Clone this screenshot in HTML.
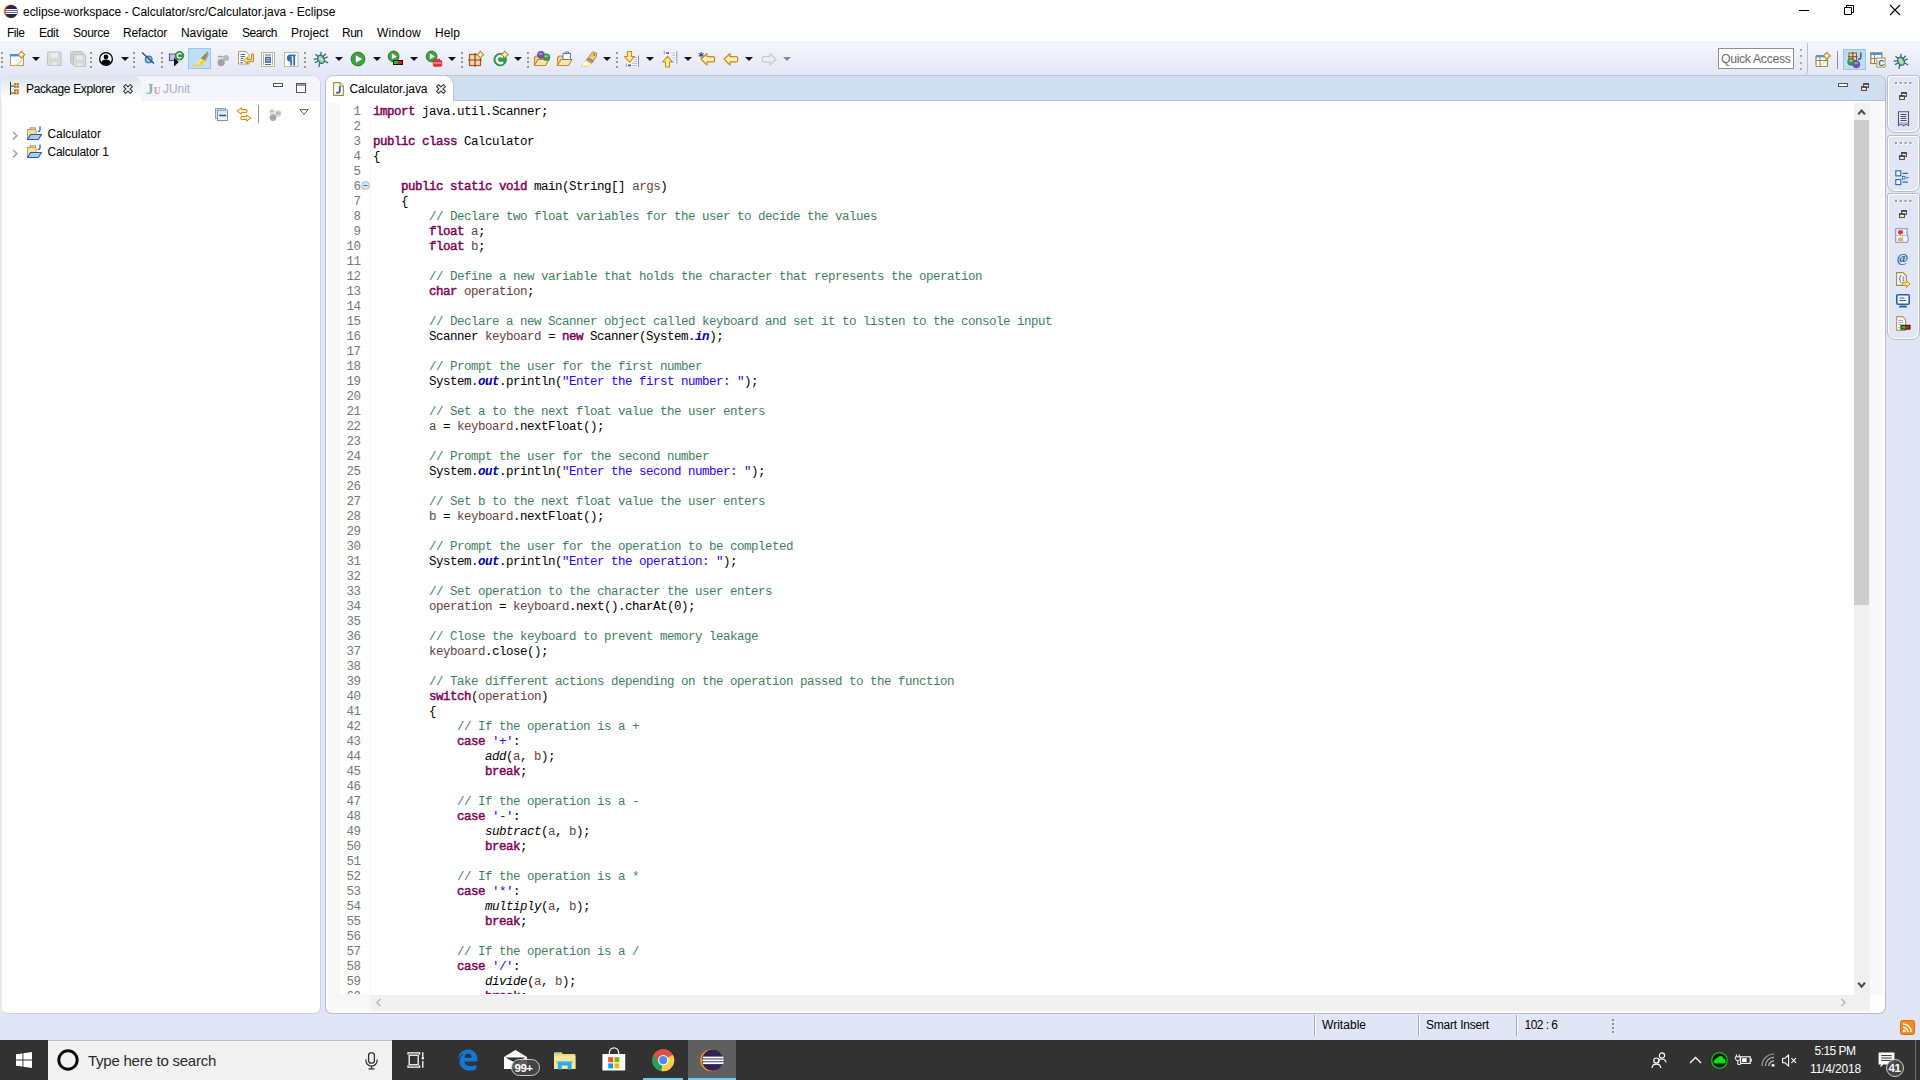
<!DOCTYPE html>
<html lang="en">
<head>
<meta charset="utf-8">
<title>eclipse-workspace - Calculator/src/Calculator.java - Eclipse</title>
<style>
*{box-sizing:border-box;margin:0;padding:0}
html,body{width:1920px;height:1080px;overflow:hidden}
body{position:relative;background:#E1E6F6;font-family:"Liberation Sans",sans-serif;font-size:12px;color:#000;-webkit-font-smoothing:antialiased}
.abs{position:absolute}
.t{position:absolute;white-space:nowrap;line-height:16px;height:16px}
svg{position:absolute;overflow:visible}
/* title + menu */
#titlebar{position:absolute;left:0;top:0;width:1920px;height:22px;background:#fff}
#menubar{position:absolute;left:0;top:22px;width:1920px;height:20px;background:#fff}
#menubar .t{top:3px}
/* toolbar */
#toolbar{position:absolute;left:0;top:42px;width:1920px;height:33px;background:linear-gradient(#F5F6FC,#E3E7F6);box-shadow:0 -1px 0 #F2F3F8}
.hdl{position:absolute;width:2px;height:16px;top:10px;background:repeating-linear-gradient(#a0977f 0 2px,transparent 2px 4.67px)}
.dd{position:absolute;top:15px;width:0;height:0;border-left:4px solid transparent;border-right:4px solid transparent;border-top:4.5px solid #111}
/* panels */
.panel{position:absolute;background:#fff;border:1px solid #B9BECD}
#left{left:1px;top:75px;width:320px;height:939px;border-radius:9px 9px 7px 7px;border-color:#d5d9e6 #cfd3e0 #cfd3e0 #eef0f8}
#lefthead{position:absolute;left:0;top:0;width:318px;height:25px;background:#F5F6FC;border-radius:8px 8px 0 0}
#lefttab{position:absolute;left:-1px;top:-1px;width:140px;height:26px;border-radius:9px 9px 0 0;background:linear-gradient(#d9e1eb,#eef1f7 45%,#fff 92%)}
#editor{left:325px;top:75px;width:1561px;height:939px;border-radius:9px 8px 7px 7px;border-color:#c0c3cc #B6BCCC #B6BCCC #B6BCCC}
#edhead{position:absolute;left:0;top:0;width:1559px;height:25px;background:#CFDFEF;border-bottom:1px solid #B4C3D8;border-radius:8px 7px 0 0}
#edtab{position:absolute;left:0;top:0;width:128px;height:25px;background:#fff;border-radius:8px 9px 0 0;border-right:1px solid #B9C4D6}
/* code */
#gutter{position:absolute;left:2px;top:27px;width:12px;height:908px;background:#F8F8F8}
#code,#nums{position:absolute;top:29px;font-family:"Liberation Mono",monospace;font-size:12.5px;letter-spacing:-0.5px;line-height:15px;white-space:pre;height:889px;overflow:hidden}
#nums{left:13px;width:21.5px;text-align:right;color:#787878}
#code{left:47px;width:1470px;color:#000}
.k{color:#7F0055;font-weight:normal;-webkit-text-stroke:0.45px #7F0055}
.c{color:#3F7F5F}
.s{color:#2A00FF}
.f{color:#0000C0;font-style:italic;font-weight:bold}
.v{color:#6A3E3E}
.m{font-style:italic}
/* status */
.sep{position:absolute;top:1015px;width:1px;height:21px;background:#a9adb8;box-shadow:1px 0 0 #fff}
/* taskbar */
#taskbar{position:absolute;left:0;top:1040px;width:1920px;height:40px;background:#323232}
#taskbar .t{color:#fff}
</style>
</head>
<body>
<div id="titlebar">
<svg style="left:3px;top:4px" width="16" height="15" viewBox="0 0 16 15"><circle cx="7.5" cy="7.4" r="6.9" fill="#f7941e"/><circle cx="8.3" cy="7.4" r="6.5" fill="#2c2255"/><rect x="2.6" y="5" width="11.8" height="1.2" fill="#fff"/><rect x="2.2" y="6.9" width="12.4" height="1.2" fill="#fff"/><rect x="2.6" y="8.8" width="11.8" height="1.2" fill="#fff"/></svg>
<span class="t" style="left:23px;top:4px;letter-spacing:-0.03px">eclipse-workspace - Calculator/src/Calculator.java - Eclipse</span>
<svg style="left:1798px;top:5px" width="12" height="12" viewBox="0 0 12 12"><path d="M1 5.5H11" stroke="#000" stroke-width="1" fill="none"/></svg>
<svg style="left:1843px;top:4px" width="12" height="12" viewBox="0 0 12 12"><path d="M1.5 3.5H8.5V10.5H1.5ZM3.5 3.5V1.5H10.5V8.5H8.5" stroke="#000" stroke-width="1" fill="none"/></svg>
<svg style="left:1889px;top:4px" width="12" height="12" viewBox="0 0 12 12"><path d="M1 1L11 11M11 1L1 11" stroke="#000" stroke-width="1.1" fill="none"/></svg>
</div>
<div id="menubar">
<span class="t" style="left:7px;letter-spacing:-0.46px">File</span>
<span class="t" style="left:39px;letter-spacing:-0.30px">Edit</span>
<span class="t" style="left:73px;letter-spacing:-0.26px">Source</span>
<span class="t" style="left:123px;letter-spacing:-0.17px">Refactor</span>
<span class="t" style="left:181px;letter-spacing:-0.05px">Navigate</span>
<span class="t" style="left:242px;letter-spacing:-0.51px">Search</span>
<span class="t" style="left:291px;letter-spacing:0.02px">Project</span>
<span class="t" style="left:342px;letter-spacing:-0.51px">Run</span>
<span class="t" style="left:377px;letter-spacing:0.22px">Window</span>
<span class="t" style="left:435px;letter-spacing:0.08px">Help</span>
</div>
<div id="toolbar">
<i class="hdl" style="left:1px"></i>
<svg style="left:9px;top:8px" width="16" height="17" viewBox="0 0 16 17"><rect x="1.5" y="4.5" width="13" height="11" fill="#f4faff" stroke="#b79a4e"/><rect x="1" y="4" width="14" height="2.4" fill="#4b8fd8"/><path d="M6 15Q12 14 13.5 8" stroke="#f3dfa0" stroke-width="1.6" fill="none"/><path d="M12.4 1.0999999999999996L13.9 3.0999999999999996L15.9 4.6L13.9 6.1L12.4 8.1L10.9 6.1L8.9 4.6L10.9 3.0999999999999996Z" fill="#f3d98a" stroke="#b58d2a" stroke-width="1.1" stroke-linejoin="round"/><path d="M12.4 2.5999999999999996V6.6M10.4 4.6H14.4" stroke="#fffdf0" stroke-width="1.1"/></svg>
<i class="dd" style="left:31.5px"></i>
<svg style="left:47px;top:9px" width="16" height="16" viewBox="0 0 16 16"><g transform="scale(1.12)"><path d="M0.5 1.9Q0.5 0.9 1.5 0.9H11.5Q12.5 0.9 12.5 1.9V12.9H1.5L0.5 11.9Z" fill="#dcdcdc" stroke="#c2c2c2"/><rect x="3" y="1.4" width="7" height="5" fill="#ececec" stroke="#cfcfcf" stroke-width="0.6"/><rect x="3.5" y="8.9" width="6" height="4" fill="#e9e9e9" stroke="#c6c6c6" stroke-width="0.7"/></g></svg>
<svg style="left:70px;top:9px" width="16" height="16" viewBox="0 0 16 16"><path d="M0.5 1.5Q0.5 0.5 1.5 0.5H11.5Q12.5 0.5 12.5 1.5V12.5H1.5L0.5 11.5Z" fill="#dcdcdc" stroke="#c2c2c2"/><rect x="3" y="1" width="7" height="5" fill="#ececec" stroke="#cfcfcf" stroke-width="0.6"/><rect x="3.5" y="8.5" width="6" height="4" fill="#e9e9e9" stroke="#c6c6c6" stroke-width="0.7"/><path d="M2.0 3.0Q2.0 2.0 3.0 2.0H13.0Q14.0 2.0 14.0 3.0V14.0H3.0L2.0 13.0Z" fill="#dcdcdc" stroke="#c2c2c2"/><rect x="4.5" y="2.5" width="7" height="5" fill="#ececec" stroke="#cfcfcf" stroke-width="0.6"/><rect x="5.0" y="10.0" width="6" height="4" fill="#e9e9e9" stroke="#c6c6c6" stroke-width="0.7"/><path d="M3.5 4.5Q3.5 3.5 4.5 3.5H14.5Q15.5 3.5 15.5 4.5V15.5H4.5L3.5 14.5Z" fill="#dcdcdc" stroke="#c2c2c2"/><rect x="6" y="4" width="7" height="5" fill="#ececec" stroke="#cfcfcf" stroke-width="0.6"/><rect x="6.5" y="11.5" width="6" height="4" fill="#e9e9e9" stroke="#c6c6c6" stroke-width="0.7"/></svg>
<i class="hdl" style="left:90px"></i>
<svg style="left:98px;top:9px" width="16" height="16" viewBox="0 0 16 16"><circle cx="8" cy="8" r="7" fill="#000"/><circle cx="8" cy="8" r="5.7" fill="#fff"/><circle cx="8" cy="6" r="2.4" fill="#000"/><path d="M3.2 11.5Q4 8.6 8 8.6Q12 8.6 12.8 11.5Q11 14 8 14Q5 14 3.2 11.5Z" fill="#000"/></svg>
<i class="dd" style="left:120.5px"></i>
<i class="hdl" style="left:133px"></i>
<svg style="left:140px;top:9px" width="16" height="16" viewBox="0 0 16 16"><circle cx="8.7" cy="8.4" r="3.3" fill="#9cc4e4" stroke="#2f79b5" stroke-width="1.3"/><path d="M2 1.5L14 12.5" stroke="#2a3f8f" stroke-width="1.2"/></svg>
<i class="hdl" style="left:161px"></i>
<svg style="left:168px;top:9px" width="16" height="16" viewBox="0 0 16 16"><rect x="1.5" y="3" width="7" height="6.5" fill="#b9c6ea" stroke="#6a4a9a" stroke-width="1.1"/><rect x="2.5" y="2" width="5" height="1.4" fill="#c9a6a6"/><path d="M6 6.5V15.5L10.8 11Z" fill="#111"/><circle cx="11.5" cy="4.7" r="4.3" fill="#2f9a46" stroke="#1d7a33" stroke-width="0.8"/><path d="M13.4 3.4A2.3 2.3 0 1 0 13.4 6" stroke="#fff" stroke-width="1.3" fill="none"/></svg>
<i class="abs" style="left:188px;top:6px;width:23px;height:21px;background:#C3DDF5;border:1px solid #90C8F6"></i>
<svg style="left:191px;top:9px" width="18" height="16" viewBox="0 0 18 16"><path d="M16.8 0.2L17.4 4L14.6 9.8L9.6 7.6Z" fill="#8e8468"/><path d="M16.8 0.2L17.4 4L14.6 9.8L13.4 9.2Z" fill="#a89f86"/><path d="M9.6 7.6L14.6 9.8L10.6 14.4L5.2 13.2Z" fill="#f2d23a"/><path d="M9.6 7.6L5.2 13.2L7 13.6L11.2 8.4Z" fill="#faec94"/><path d="M1 14.6H7.4" stroke="#ecd03a" stroke-width="1.5"/></svg>
<svg style="left:216px;top:11px" width="16" height="16" viewBox="0 0 16 16"><circle cx="4" cy="4" r="2.7" fill="#dedede"/><circle cx="10" cy="5" r="3" fill="#b5b5b5"/><circle cx="5.2" cy="9.6" r="3.6" fill="#a2a2a2"/><path d="M2 3.6H7" stroke="#9a9a9a" stroke-width="1"/></svg>
<svg style="left:238px;top:9px" width="16" height="16" viewBox="0 0 16 16"><path d="M0.5 0.5H8L11 3.5V13H0.5Z" fill="#fdfcf2" stroke="#b9a15e"/><path d="M2.5 3.5H7M2.5 5.5H7M2.5 7.5H5.5M2.5 9.5H4.5M2.5 11.5H4.5" stroke="#3f6cb4" stroke-width="1"/><path d="M13.5 3V8.5H9.5V6.3L5.5 9.6L9.5 12.8V10.6H15.5V3Z" fill="#fbe39a" stroke="#c98a12" stroke-width="1"/></svg>
<svg style="left:260px;top:9px" width="16" height="17" viewBox="0 0 16 17"><rect x="1.5" y="1.5" width="13" height="14" fill="#fdfdf8" stroke="#c4b47e" stroke-width="1"/><path d="M3.5 3.5V14M12.5 3.5V14" stroke="#3f6cb4" stroke-width="1" stroke-dasharray="1 1"/><path d="M5 4H11M5 13.5H11" stroke="#3f6cb4" stroke-width="1.2"/><rect x="5" y="5.8" width="6" height="6" fill="#2f5fa8"/><path d="M5.6 7.8H10.4M5.6 9.8H10.4" stroke="#dbe6f7" stroke-width="0.9"/></svg>
<svg style="left:283px;top:9px" width="16" height="17" viewBox="0 0 16 17"><rect x="1.5" y="1.5" width="13.5" height="14" fill="#fbfcff" stroke="#c9b98a" stroke-width="1"/><path d="M12.6 4.4H7.4A2.6 2.6 0 0 0 7.4 9.6H8.2V14.4M11.2 4.4V14.4" stroke="#2f6fb8" stroke-width="1.8" fill="none"/><circle cx="7" cy="7" r="2.1" fill="#2f6fb8"/></svg>
<i class="hdl" style="left:304px"></i>
<svg style="left:313px;top:9px" width="16" height="16" viewBox="0 0 16 16"><g transform="rotate(-24 8 8.3)"><ellipse cx="8" cy="8.3" rx="3.1" ry="4.3" fill="#a5cf98" stroke="#2f7280" stroke-width="1.3"/><path d="M6.4 4.6L5 1.5M9.6 4.6L11 1.5M5 6.6L1.3 5.2M11 6.6L14.7 5.2M4.9 8.8H1M11.1 8.8H15M5.4 11L3 14.5M10.6 11L13 14.5" stroke="#2a6a72" stroke-width="1.25" fill="none"/><path d="M6.8 6L9.4 10.6" stroke="#d7eccf" stroke-width="1"/></g></svg>
<i class="dd" style="left:334.5px"></i>
<svg style="left:350px;top:9px" width="16" height="16" viewBox="0 0 16 16"><circle cx="8" cy="8" r="6.9" fill="#46a043" stroke="#2b7a2b" stroke-width="1"/><path d="M5.792 4.205L12.14 8L5.792 11.795Z" fill="#fff"/></svg>
<i class="dd" style="left:372.5px"></i>
<svg style="left:387px;top:9px" width="16" height="16" viewBox="0 0 16 16"><circle cx="6.6" cy="5.4" r="5.4" fill="#46a043" stroke="#2b7a2b" stroke-width="1"/><path d="M4.872 2.4299999999999997L9.84 5.4L4.872 8.370000000000001Z" fill="#fff"/><rect x="6" y="9" width="10" height="5" fill="#111"/><rect x="7" y="10" width="4" height="3" fill="#1fc32b"/><rect x="11" y="10" width="4" height="3" fill="#e01515"/></svg>
<i class="dd" style="left:410.3px"></i>
<svg style="left:425px;top:9px" width="18" height="17" viewBox="0 0 18 17"><circle cx="6.6" cy="5.4" r="5.4" fill="#46a043" stroke="#2b7a2b" stroke-width="1"/><path d="M4.872 2.4299999999999997L9.84 5.4L4.872 8.370000000000001Z" fill="#fff"/><rect x="8.3" y="9.6" width="8.4" height="5.6" rx="0.8" fill="#e8383a" stroke="#c61f22" stroke-width="0.8"/><path d="M10.6 9.6V8.2H14.4V9.6" stroke="#d4282b" stroke-width="1.1" fill="none"/><path d="M8.5 12H16.5" stroke="#ffd0d0" stroke-width="0.9"/></svg>
<i class="dd" style="left:448.3px"></i>
<i class="hdl" style="left:461px"></i>
<svg style="left:468px;top:9px" width="16" height="17" viewBox="0 0 16 17"><rect x="1.5" y="3.5" width="11" height="11" fill="#f3dca4" stroke="#a8572f" stroke-width="1.2"/><path d="M7 2V16M0 9H14" stroke="#8e3f26" stroke-width="1.2"/><path d="M12.4 0.10000000000000009L13.9 2.1L15.9 3.6L13.9 5.1L12.4 7.1L10.9 5.1L8.9 3.6L10.9 2.1Z" fill="#f3d98a" stroke="#b58d2a" stroke-width="1.1" stroke-linejoin="round"/><path d="M12.4 1.6V5.6M10.4 3.6H14.4" stroke="#fffdf0" stroke-width="1.1"/></svg>
<svg style="left:492px;top:9px" width="16" height="16" viewBox="0 0 16 16"><circle cx="8.2" cy="8.6" r="6.2" fill="#2f9e47" stroke="#1e7f34" stroke-width="0.9"/><path d="M11 6.2A3.6 3.6 0 1 0 11 11" stroke="#fff" stroke-width="2.4" fill="none"/><path d="M12.8 0.10000000000000009L14.3 2.1L16.3 3.6L14.3 5.1L12.8 7.1L11.3 5.1L9.3 3.6L11.3 2.1Z" fill="#f3d98a" stroke="#b58d2a" stroke-width="1.1" stroke-linejoin="round"/><path d="M12.8 1.6V5.6M10.8 3.6H14.8" stroke="#fffdf0" stroke-width="1.1"/></svg>
<i class="dd" style="left:514.3px"></i>
<i class="hdl" style="left:527px"></i>
<svg style="left:533px;top:9px" width="17" height="16" viewBox="0 0 17 16"><path d="M1.5 14.5V6.5L3 5H6.5L8 6.5H13.5V8.5" fill="#f6d88c" stroke="#c98a2a" stroke-width="1.1"/><path d="M1.5 14.5L4.8 8.5H16L12.6 14.5Z" fill="#fbe7aa" stroke="#c98a2a" stroke-width="1.1"/><circle cx="8" cy="3.8" r="3.6" fill="#6f58b0" stroke="#54408f" stroke-width="0.6"/><ellipse cx="7.6" cy="2.8" rx="2" ry="1" fill="#a596d6"/><circle cx="13.5" cy="6.2" r="3.4" fill="#3f9a4e" stroke="#2b7a3a" stroke-width="0.6"/><ellipse cx="13.2" cy="5.2" rx="1.9" ry="0.9" fill="#8fcf97"/></svg>
<svg style="left:556px;top:9px" width="17" height="16" viewBox="0 0 17 16"><path d="M1.5 14.5V6.5L3 5H6.5L8 6.5H13.5V8.5" fill="#f6d88c" stroke="#c98a2a" stroke-width="1.1"/><path d="M1.5 14.5L4.8 8.5H16L12.6 14.5Z" fill="#fbe7aa" stroke="#c98a2a" stroke-width="1.1"/><rect x="7" y="2.5" width="7.5" height="6" fill="#fff" stroke="#5f7fb4" stroke-width="1"/><path d="M9 2.5V1H12.5V2.5" stroke="#5f7fb4" stroke-width="1" fill="none"/></svg>
<svg style="left:581px;top:9px" width="16" height="17" viewBox="0 0 16 17"><path d="M11.6 0.8L15.8 2.2L15.4 5.6L12.4 10L7 7Z" fill="#f3c870" stroke="#c98a2a" stroke-width="1"/><path d="M7 7L12.4 10L10.4 12.6L5 9.6Z" fill="#a39d94" stroke="#7f7a72" stroke-width="0.8"/><path d="M5 9.6L10.4 12.6L6.4 16L0.6 14.6Z" fill="#fff6c4" stroke="#edc958" stroke-width="0.9"/><path d="M5.6 10.6L2 14.4" stroke="#fff" stroke-width="1.6"/><path d="M12.6 2.8L13.6 4.6" stroke="#3f5fa8" stroke-width="1.3"/></svg>
<i class="dd" style="left:603.3px"></i>
<i class="hdl" style="left:616px"></i>
<svg style="left:624px;top:9px" width="16" height="17" viewBox="0 0 16 17"><path d="M8 5H14.5V15.8H2V11" fill="#f7f9fd"/><path d="M14.5 4.5V16M2.3 12.5V16" stroke="#7f9cc6" stroke-width="1"/><path d="M9 6.5H13M10 8.5H13M10 10.5H13M8 12.5H13M8 14.5H13" stroke="#b4c3de" stroke-width="1"/><rect x="4" y="13.5" width="3" height="1.8" fill="#2f5fa8"/><path d="M3.5 0.5H7.5V5.5H10.3L5.5 11.2L0.7 5.5H3.5Z" fill="#fceaa8" stroke="#d08a10" stroke-width="1.1"/></svg>
<i class="dd" style="left:646.4px"></i>
<svg style="left:662px;top:9px" width="16" height="17" viewBox="0 0 16 17"><path d="M2 0.5H14.8V12.5H2Z" fill="#f7f9fd"/><path d="M14.8 0V12.5M2.3 0V3.5" stroke="#7f9cc6" stroke-width="1"/><rect x="4" y="1.2" width="3" height="1.8" fill="#4f6fb8"/><path d="M8.5 2.2H13M9.5 4.4H13M10.5 6.6H13M10.5 8.8H13M9.5 11H13" stroke="#b4c3de" stroke-width="1"/><path d="M3.5 16H7.5V11H10.3L5.5 5.2L0.7 11H3.5Z" fill="#fceaa8" stroke="#d08a10" stroke-width="1.1"/></svg>
<i class="dd" style="left:684.4px"></i>
<svg style="left:698px;top:9px" width="18" height="16" viewBox="0 0 18 16"><path d="M9 2.5L3 8.3L9 14.1V10.9H15.4Q16.6 10.9 16.6 9.7V6.9Q16.6 5.7 15.4 5.7H9Z" fill="#fdf0c0" stroke="#d08a10" stroke-width="1.2" stroke-linejoin="round"/><path d="M3.2 1V6.6M0.8 2.4L5.6 5.2M5.6 2.4L0.8 5.2" stroke="#2f5596" stroke-width="1.1"/></svg>
<svg style="left:723px;top:9px" width="16" height="16" viewBox="0 0 16 16"><path d="M7 2.5L1 8.3L7 14.1V10.9H13.4Q14.6 10.9 14.6 9.7V6.9Q14.6 5.7 13.4 5.7H7Z" fill="#fdf0c0" stroke="#d08a10" stroke-width="1.2" stroke-linejoin="round"/></svg>
<i class="dd" style="left:745.4px"></i>
<svg style="left:761px;top:9px" width="16" height="16" viewBox="0 0 16 16"><g transform="translate(16,0) scale(-1,1)"><path d="M7 2.5L1 8.3L7 14.1V10.9H13.4Q14.6 10.9 14.6 9.7V6.9Q14.6 5.7 13.4 5.7H7Z" fill="#efefef" stroke="#c9c9c9" stroke-width="1.2" stroke-linejoin="round"/></g></svg>
<i class="dd" style="left:783.4px;border-top-color:#8a8a8a"></i>
<i class="abs" style="left:1718px;top:6px;width:76px;height:21px;background:#fff;border:1px solid #8e8e8e"></i>
<span class="t" style="left:1721px;top:9px;color:#6b6b6b;font-size:12.3px;letter-spacing:-0.36px">Quick Access</span>
<i class="hdl" style="left:1800px;top:7px;height:21px;background:repeating-linear-gradient(#b0a690 0 2px,transparent 2px 6.33px)"></i>
<svg style="left:1800px;top:1px" width="10" height="33" viewBox="0 0 10 33"><path d="M7.5 0V28Q7.5 32.5 3 32.5H0" fill="none" stroke="#b9bdca" stroke-width="1"/></svg>
<svg style="left:1815px;top:10px" width="16" height="16" viewBox="0 0 16 16"><rect x="1" y="3.5" width="11.5" height="11" rx="1" fill="#f6fbff" stroke="#a58a45" stroke-width="1.2"/><rect x="1" y="3" width="11.5" height="2.4" fill="#5b96da"/><path d="M1 8.5H12.5M5 5.4V14.5" stroke="#a58a45" stroke-width="1.1"/><path d="M6 13L11 9.5" stroke="#f0dfae" stroke-width="1.2"/><path d="M11.8 0.2999999999999998L13.3 2.3L15.3 3.8L13.3 5.3L11.8 7.3L10.3 5.3L8.3 3.8L10.3 2.3Z" fill="#f3d98a" stroke="#b58d2a" stroke-width="1.1" stroke-linejoin="round"/><path d="M11.8 1.7999999999999998V5.8M9.8 3.8H13.8" stroke="#fffdf0" stroke-width="1.1"/></svg>
<i class="abs" style="left:1837px;top:9px;width:1px;height:18px;background:#8f8f8f"></i>
<i class="abs" style="left:1843px;top:7px;width:23px;height:21px;background:#C0DCF3;border:1px solid #90C8F6"></i>
<svg style="left:1847px;top:10px" width="16" height="16" viewBox="0 0 16 16"><rect x="2" y="1" width="7.5" height="7.5" fill="#ecd6ab" stroke="#935033" stroke-width="1"/><path d="M5.8 0V9.5M1 4.7H10.5" stroke="#8e3f26" stroke-width="1.1"/><path d="M13.8 0.5V5Q13.8 7.4 11 7" stroke="#3f6fae" stroke-width="1.8" fill="none"/><circle cx="4.2" cy="9.8" r="3.6" fill="#3f9a4e" stroke="#2b7a3a" stroke-width="0.6"/><ellipse cx="4" cy="8.7" rx="2" ry="1" fill="#8fcf97"/><circle cx="9.3" cy="12.3" r="3.6" fill="#6f58b0" stroke="#54408f" stroke-width="0.6"/><ellipse cx="9" cy="11.1" rx="2" ry="1" fill="#a596d6"/></svg>
<svg style="left:1870px;top:10px" width="16" height="16" viewBox="0 0 16 16"><rect x="0.8" y="1" width="11" height="10.5" fill="#f5fbff" stroke="#9a8450" stroke-width="1.2"/><rect x="0.5" y="0.5" width="11.6" height="2.4" fill="#4b8fd8"/><path d="M0.8 6.5H12M4.5 3V11" stroke="#9a8450" stroke-width="1"/><rect x="6.8" y="6" width="8.2" height="9" fill="#fdfdf8" stroke="#b39a57" stroke-width="1.1"/></svg>
<span class="t" style="left:1878.2px;top:15.6px;font-size:8.5px;font-weight:bold;color:#2f5f9e;line-height:10px;height:10px">C</span>
<svg style="left:1893px;top:11px" width="16" height="16" viewBox="0 0 16 16"><g transform="rotate(-24 8 8.3)"><ellipse cx="8" cy="8.3" rx="3.1" ry="4.3" fill="#a5cf98" stroke="#2f7280" stroke-width="1.3"/><path d="M6.4 4.6L5 1.5M9.6 4.6L11 1.5M5 6.6L1.3 5.2M11 6.6L14.7 5.2M4.9 8.8H1M11.1 8.8H15M5.4 11L3 14.5M10.6 11L13 14.5" stroke="#2a6a72" stroke-width="1.25" fill="none"/><path d="M6.8 6L9.4 10.6" stroke="#d7eccf" stroke-width="1"/></g></svg>
</div>
<div id="left" class="panel">
<div id="lefthead"></div><div id="lefttab"></div>
<svg style="left:7px;top:5px" width="12" height="15" viewBox="0 0 12 15"><path d="M1.5 0.8V14M1.5 5H5M1.5 12H5" stroke="#3c3c3c" stroke-width="1" fill="none"/><rect x="5" y="2" width="4.8" height="4.8" fill="#c06a2c"/><path d="M7.4 2V6.8M5 4.4H9.8" stroke="#f2c796" stroke-width="0.8"/><rect x="5" y="8.4" width="4.8" height="4.8" fill="#c06a2c"/><path d="M7.4 8.4V13.2M5 10.8H9.8" stroke="#f2c796" stroke-width="0.8"/></svg>
<span class="t" style="left:24px;top:5px;letter-spacing:-0.36px">Package Explorer</span>
<svg style="left:121px;top:8px" width="10" height="10" viewBox="0 0 10 10"><path d="M0.6 2.6L2.6 0.6L5 3L7.4 0.6L9.4 2.6L7 5L9.4 7.4L7.4 9.4L5 7L2.6 9.4L0.6 7.4L3 5Z" fill="#fff" stroke="#3f3f3f" stroke-width="1.1" stroke-linejoin="round"/></svg>
<span class="t" style="left:144px;top:5px;font-family:'Liberation Serif',serif;font-weight:bold;font-size:15px;color:#86bb98">J<span style="font-size:9.5px;color:#e58f9d;font-weight:bold;margin-left:0.3px">U</span></span>
<span class="t" style="left:161px;top:5px;color:#a9adc0;letter-spacing:-0.07px">JUnit</span>
<svg style="left:271px;top:7px" width="10" height="4" viewBox="0 0 10 4"><rect x="0.5" y="0.5" width="9" height="3" fill="#fff" stroke="#555"/></svg>
<svg style="left:294px;top:7px" width="10" height="10" viewBox="0 0 10 10"><rect x="0.5" y="0.5" width="9" height="9" fill="#fff" stroke="#555"/><path d="M0.5 2H9.5" stroke="#555" stroke-width="1.2"/></svg>
<svg style="left:213px;top:32px" width="14" height="14" viewBox="0 0 14 14"><rect x="0.5" y="0.5" width="10" height="10" fill="#d4e6ea" stroke="#8f9bb9"/><rect x="2.5" y="2.2" width="10" height="10.3" fill="#d5eaec" stroke="#8592b4"/><path d="M3 8L12 3V12H3Z" fill="#f4fafb" opacity=".7"/><path d="M4.2 7.5H11" stroke="#1f4f8f" stroke-width="1.5"/></svg>
<svg style="left:234px;top:31px" width="16" height="15" viewBox="0 0 16 15"><path d="M5.5 0.8L1 4L5.5 7.2V5.4H11V2.6H5.5Z" fill="#fdf3cc" stroke="#c98a1a" stroke-width="1" stroke-linejoin="round"/><path d="M10.5 7.8L15 11L10.5 14.2V12.4H5V9.6H10.5Z" fill="#fdf3cc" stroke="#c98a1a" stroke-width="1" stroke-linejoin="round"/></svg>
<i class="abs" style="left:256px;top:29px;width:1px;height:18px;background:#8f8f8f"></i>
<svg style="left:266px;top:32px" width="14" height="14" viewBox="0 0 14 14"><circle cx="4" cy="3.6" r="2.8" fill="#e0e0e0"/><circle cx="10.2" cy="5.4" r="3.1" fill="#cfcfcf"/><circle cx="5" cy="9.6" r="3.4" fill="#a9a9a9"/><path d="M2.2 3.4H5.8M8 5.2H12.4M2.6 9.6H7.4" stroke="#8f8f8f" stroke-width="0.9" opacity=".7"/></svg>
<svg style="left:297px;top:33px" width="10" height="6" viewBox="0 0 10 6"><path d="M0.8 0.6H9.2L5 5.4Z" fill="#fff" stroke="#5a5a5a" stroke-width="1" stroke-linejoin="round"/></svg>
<svg style="left:10px;top:55px" width="7" height="10" viewBox="0 0 7 10"><path d="M1 1L5 4.7L1 8.4" stroke="#a6a6a6" stroke-width="1.6" fill="none"/></svg>
<svg style="left:24px;top:50px" width="17" height="15" viewBox="0 0 17 15"><path d="M1 3.5H4V1.8H9.5V3.5" fill="#f3e3b0" stroke="#8f84a6" stroke-width="0.9"/><path d="M1.5 13.5V3.5H10V8" fill="#f8df9c" stroke="#c9a04a" stroke-width="1"/><path d="M1.5 13.5L4.5 8.5H15.5L12.3 13.5Z" fill="#a9cdf3" stroke="#2f57a8" stroke-width="1.1" stroke-linejoin="round"/><path d="M14 0.5V4Q14 5.8 11.6 5.4" stroke="#2f5fa0" stroke-width="1.3" fill="none"/></svg>
<span class="t" style="left:45.5px;top:50px;letter-spacing:-0.07px">Calculator</span>
<svg style="left:10px;top:73px" width="7" height="10" viewBox="0 0 7 10"><path d="M1 1L5 4.7L1 8.4" stroke="#a6a6a6" stroke-width="1.6" fill="none"/></svg>
<svg style="left:24px;top:68px" width="17" height="15" viewBox="0 0 17 15"><path d="M1 3.5H4V1.8H9.5V3.5" fill="#f3e3b0" stroke="#8f84a6" stroke-width="0.9"/><path d="M1.5 13.5V3.5H10V8" fill="#f8df9c" stroke="#c9a04a" stroke-width="1"/><path d="M1.5 13.5L4.5 8.5H15.5L12.3 13.5Z" fill="#a9cdf3" stroke="#2f57a8" stroke-width="1.1" stroke-linejoin="round"/><path d="M14 0.5V4Q14 5.8 11.6 5.4" stroke="#2f5fa0" stroke-width="1.3" fill="none"/></svg>
<span class="t" style="left:45.5px;top:68px;letter-spacing:-0.24px">Calculator 1</span>
</div>
<div id="editor" class="panel">
<div id="edhead"></div><div id="edtab"></div>
<svg style="left:7px;top:6px" width="11" height="14" viewBox="0 0 11 14"><path d="M0.6 0.6H7L10.4 4V13.4H0.6Z" fill="#fffef6" stroke="#a58a45" stroke-width="1.1"/><path d="M7 0.6V4H10.4" fill="#f3e2b0" stroke="#a58a45" stroke-width="0.9"/><path d="M6.8 4.2V9Q6.8 11.3 3.2 10.6" stroke="#2f5f9e" stroke-width="1.8" fill="none"/></svg>
<span class="t" style="left:23.5px;top:5px;letter-spacing:-0.05px">Calculator.java</span>
<svg style="left:110px;top:8px" width="10" height="10" viewBox="0 0 10 10"><path d="M0.6 2.6L2.6 0.6L5 3L7.4 0.6L9.4 2.6L7 5L9.4 7.4L7.4 9.4L5 7L2.6 9.4L0.6 7.4L3 5Z" fill="#fff" stroke="#3f3f3f" stroke-width="1.1" stroke-linejoin="round"/></svg>
<svg style="left:1512px;top:7px" width="10" height="4" viewBox="0 0 10 4"><rect x="0.5" y="0.5" width="9" height="3" fill="#fff" stroke="#555"/></svg>
<svg style="left:1535px;top:7px" width="8" height="8" viewBox="0 0 8 8"><rect x="2.6" y="0.6" width="4.8" height="3.8" fill="#fff" stroke="#4f4a45" stroke-width="1.1"/><path d="M2.6 1.2H7.4" stroke="#4f4a45" stroke-width="1.5"/><rect x="0.6" y="3.6" width="4.8" height="3.8" fill="#fff" stroke="#4f4a45" stroke-width="1.1"/><path d="M0.6 4.2H5.4" stroke="#4f4a45" stroke-width="1.5"/></svg>
<div id="gutter"></div>
<i class="abs" style="left:2px;top:918px;width:43px;height:17px;background:#F8F8F8"></i>
<i class="abs" style="left:44px;top:27px;width:1px;height:891px;background:#F6F6F6"></i>
<div id="nums">1
2
3
4
5
6
7
8
9
10
11
12
13
14
15
16
17
18
19
20
21
22
23
24
25
26
27
28
29
30
31
32
33
34
35
36
37
38
39
40
41
42
43
44
45
46
47
48
49
50
51
52
53
54
55
56
57
58
59
60</div>
<div id="code"><span class="k">import</span> java.util.Scanner;

<span class="k">public</span> <span class="k">class</span> Calculator
{

    <span class="k">public</span> <span class="k">static</span> <span class="k">void</span> main(String[] <span class="v">args</span>)
    {
        <span class="c">// Declare two float variables for the user to decide the values</span>
        <span class="k">float</span> <span class="v">a</span>;
        <span class="k">float</span> <span class="v">b</span>;

        <span class="c">// Define a new variable that holds the character that represents the operation</span>
        <span class="k">char</span> <span class="v">operation</span>;

        <span class="c">// Declare a new Scanner object called keyboard and set it to listen to the console input</span>
        Scanner <span class="v">keyboard</span> = <span class="k">new</span> Scanner(System.<span class="f">in</span>);

        <span class="c">// Prompt the user for the first number</span>
        System.<span class="f">out</span>.println(<span class="s">"Enter the first number: "</span>);

        <span class="c">// Set a to the next float value the user enters</span>
        <span class="v">a</span> = <span class="v">keyboard</span>.nextFloat();

        <span class="c">// Prompt the user for the second number</span>
        System.<span class="f">out</span>.println(<span class="s">"Enter the second number: "</span>);

        <span class="c">// Set b to the next float value the user enters</span>
        <span class="v">b</span> = <span class="v">keyboard</span>.nextFloat();

        <span class="c">// Prompt the user for the operation to be completed</span>
        System.<span class="f">out</span>.println(<span class="s">"Enter the operation: "</span>);

        <span class="c">// Set operation to the character the user enters</span>
        <span class="v">operation</span> = <span class="v">keyboard</span>.next().charAt(0);

        <span class="c">// Close the keyboard to prevent memory leakage</span>
        <span class="v">keyboard</span>.close();

        <span class="c">// Take different actions depending on the operation passed to the function</span>
        <span class="k">switch</span>(<span class="v">operation</span>)
        {
            <span class="c">// If the operation is a +</span>
            <span class="k">case</span> <span class="s">'+'</span>:
                <span class="m">add</span>(<span class="v">a</span>, <span class="v">b</span>);
                <span class="k">break</span>;

            <span class="c">// If the operation is a -</span>
            <span class="k">case</span> <span class="s">'-'</span>:
                <span class="m">subtract</span>(<span class="v">a</span>, <span class="v">b</span>);
                <span class="k">break</span>;

            <span class="c">// If the operation is a *</span>
            <span class="k">case</span> <span class="s">'*'</span>:
                <span class="m">multiply</span>(<span class="v">a</span>, <span class="v">b</span>);
                <span class="k">break</span>;

            <span class="c">// If the operation is a /</span>
            <span class="k">case</span> <span class="s">'/'</span>:
                <span class="m">divide</span>(<span class="v">a</span>, <span class="v">b</span>);
                <span class="k">break</span>;</div>
<svg style="left:34.5px;top:105px" width="9" height="9" viewBox="0 0 9 9"><circle cx="4.5" cy="4.5" r="4" fill="#d9e4f1" stroke="#9fb3cc" stroke-width="0.9"/><path d="M2.3 4.5H6.7" stroke="#5f7da6" stroke-width="1"/></svg>
<i class="abs" style="left:1528px;top:27px;width:16px;height:892px;background:#F0F0F0"></i>
<i class="abs" style="left:1544px;top:27px;width:13px;height:892px;background:#F8F8F8"></i>
<i class="abs" style="left:1528px;top:44px;width:15px;height:485px;background:#CDCDCD"></i>
<svg style="left:1531px;top:32px" width="9" height="8" viewBox="0 0 9 8"><path d="M1.2 6.4L4.6 2.6L8 6.4" stroke="#4a4a4a" stroke-width="2.1" fill="none"/></svg>
<svg style="left:1531px;top:905px" width="9" height="8" viewBox="0 0 9 8"><path d="M1.2 1.8L4.6 5.6L8 1.8" stroke="#4a4a4a" stroke-width="2.1" fill="none"/></svg>
<i class="abs" style="left:45px;top:919px;width:1499px;height:16px;background:#F0F0F0"></i>
<svg style="left:49px;top:922px" width="8" height="9" viewBox="0 0 8 9"><path d="M5.5 1L2 4.5L5.5 8" stroke="#b8b8b8" stroke-width="1.5" fill="none"/></svg>
<svg style="left:1513px;top:922px" width="8" height="9" viewBox="0 0 8 9"><path d="M2.5 1L6 4.5L2.5 8" stroke="#b8b8b8" stroke-width="1.5" fill="none"/></svg>
</div>
<div id="righttrim">
<i class="abs" style="left:1887px;top:75px;width:33px;height:58px;border:1px solid #B6BCCC;border-radius:3px 3px 8px 8px;background:#E1E6F6;box-shadow:inset 1px 1px 0 #fff,inset -1px -1px 0 #fff"></i>
<svg style="left:1895px;top:81.5px" width="18" height="3" viewBox="0 0 18 3"><rect x="1.0" y="1" width="2" height="2" fill="#fff"/><rect x="0.0" y="0" width="2" height="2" fill="#a39a84"/><rect x="5.8" y="1" width="2" height="2" fill="#fff"/><rect x="4.8" y="0" width="2" height="2" fill="#a39a84"/><rect x="10.6" y="1" width="2" height="2" fill="#fff"/><rect x="9.6" y="0" width="2" height="2" fill="#a39a84"/><rect x="15.399999999999999" y="1" width="2" height="2" fill="#fff"/><rect x="14.399999999999999" y="0" width="2" height="2" fill="#a39a84"/></svg>
<svg style="left:1899px;top:92px" width="8" height="8" viewBox="0 0 8 8"><rect x="2.6" y="0.6" width="4.8" height="3.8" fill="#fff" stroke="#4f4a45" stroke-width="1.1"/><path d="M2.6 1.2H7.4" stroke="#4f4a45" stroke-width="1.5"/><rect x="0.6" y="3.6" width="4.8" height="3.8" fill="#fff" stroke="#4f4a45" stroke-width="1.1"/><path d="M0.6 4.2H5.4" stroke="#4f4a45" stroke-width="1.5"/></svg>
<i class="abs" style="left:1887px;top:135px;width:33px;height:57px;border:1px solid #B6BCCC;border-radius:3px 3px 8px 8px;background:#E1E6F6;box-shadow:inset 1px 1px 0 #fff,inset -1px -1px 0 #fff"></i>
<svg style="left:1895px;top:141.5px" width="18" height="3" viewBox="0 0 18 3"><rect x="1.0" y="1" width="2" height="2" fill="#fff"/><rect x="0.0" y="0" width="2" height="2" fill="#a39a84"/><rect x="5.8" y="1" width="2" height="2" fill="#fff"/><rect x="4.8" y="0" width="2" height="2" fill="#a39a84"/><rect x="10.6" y="1" width="2" height="2" fill="#fff"/><rect x="9.6" y="0" width="2" height="2" fill="#a39a84"/><rect x="15.399999999999999" y="1" width="2" height="2" fill="#fff"/><rect x="14.399999999999999" y="0" width="2" height="2" fill="#a39a84"/></svg>
<svg style="left:1899px;top:152px" width="8" height="8" viewBox="0 0 8 8"><rect x="2.6" y="0.6" width="4.8" height="3.8" fill="#fff" stroke="#4f4a45" stroke-width="1.1"/><path d="M2.6 1.2H7.4" stroke="#4f4a45" stroke-width="1.5"/><rect x="0.6" y="3.6" width="4.8" height="3.8" fill="#fff" stroke="#4f4a45" stroke-width="1.1"/><path d="M0.6 4.2H5.4" stroke="#4f4a45" stroke-width="1.5"/></svg>
<i class="abs" style="left:1887px;top:193px;width:33px;height:147px;border:1px solid #B6BCCC;border-radius:3px 3px 8px 8px;background:#E1E6F6;box-shadow:inset 1px 1px 0 #fff,inset -1px -1px 0 #fff"></i>
<svg style="left:1895px;top:199.5px" width="18" height="3" viewBox="0 0 18 3"><rect x="1.0" y="1" width="2" height="2" fill="#fff"/><rect x="0.0" y="0" width="2" height="2" fill="#a39a84"/><rect x="5.8" y="1" width="2" height="2" fill="#fff"/><rect x="4.8" y="0" width="2" height="2" fill="#a39a84"/><rect x="10.6" y="1" width="2" height="2" fill="#fff"/><rect x="9.6" y="0" width="2" height="2" fill="#a39a84"/><rect x="15.399999999999999" y="1" width="2" height="2" fill="#fff"/><rect x="14.399999999999999" y="0" width="2" height="2" fill="#a39a84"/></svg>
<svg style="left:1899px;top:210px" width="8" height="8" viewBox="0 0 8 8"><rect x="2.6" y="0.6" width="4.8" height="3.8" fill="#fff" stroke="#4f4a45" stroke-width="1.1"/><path d="M2.6 1.2H7.4" stroke="#4f4a45" stroke-width="1.5"/><rect x="0.6" y="3.6" width="4.8" height="3.8" fill="#fff" stroke="#4f4a45" stroke-width="1.1"/><path d="M0.6 4.2H5.4" stroke="#4f4a45" stroke-width="1.5"/></svg>
<svg style="left:1897px;top:111px" width="13" height="16" viewBox="0 0 13 16"><path d="M1.5 0.8H11.5V14.5L9 13L6.5 14.8L4 13L1.5 14.5Z" fill="#e9e9f7" stroke="#55555f" stroke-width="1.1"/><path d="M3.5 3.5H9.5M3.5 5.5H9.5M3.5 7.5H9.5M3.5 9.5H9.5" stroke="#3a3a44" stroke-width="0.9"/><path d="M2 11H11V14L9 12.8L6.5 14.4L4 12.8L2 14Z" fill="#b8b4e6"/></svg>
<svg style="left:1895px;top:170px" width="14" height="16" viewBox="0 0 14 16"><rect x="0.8" y="0.8" width="5" height="5" fill="#fff" stroke="#2f6fc0" stroke-width="1.2"/><rect x="0.8" y="9.6" width="5" height="5" fill="#fff" stroke="#2f6fc0" stroke-width="1.2"/><path d="M7.5 3.4H13M7.5 12.2H13M11.5 7.7H13.5" stroke="#2f6fc0" stroke-width="1.2"/><rect x="7.4" y="6.4" width="2.6" height="2.6" fill="#fff" stroke="#2f6fc0" stroke-width="1"/></svg>
<svg style="left:1895px;top:228px" width="15" height="15" viewBox="0 0 15 15"><path d="M0.7 0.7H12.5Q11 4 12.5 7.4Q14 11 12.5 14.3H0.7Z" fill="#f2f4fb" stroke="#7f8fb6" stroke-width="1"/><path d="M0.7 7.5H12.5M7.6 0.7V14.3" stroke="#a9b4d2" stroke-width="0.8"/><circle cx="5.3" cy="4.3" r="2.4" fill="#e5343a"/><path d="M3 13V11.6Q3 9.4 5.3 9.4Q7.6 9.4 7.6 11.6V13Z" fill="#f5a623"/></svg>
<span class="t" style="left:1897px;top:249.5px;font-family:'Liberation Serif',serif;font-style:italic;font-weight:bold;font-size:13px;color:#2f6fb8">@</span>
<svg style="left:1896px;top:272px" width="15" height="16" viewBox="0 0 15 16"><path d="M0.6 0.6H7L10.4 4V13.4H0.6Z" fill="#fffef6" stroke="#a58a45" stroke-width="1.1"/><path d="M5.6 3.5Q4 3.5 4 5V6Q4 7 3 7Q4 7 4 8V9Q4 10.5 5.6 10.5" stroke="#2f5f9e" stroke-width="0.9" fill="none"/><path d="M6.4 5.2H8.4M6.4 7H8.4M6.4 8.8H8.4" stroke="#2f5f9e" stroke-width="0.9"/><path d="M6.5 10.6H10.3V8.6L14.2 12L10.3 15.4V13.4H6.5Z" fill="#fbe08a" stroke="#c98a1a" stroke-width="0.9" stroke-linejoin="round"/></svg>
<svg style="left:1896px;top:294px" width="14" height="14" viewBox="0 0 14 14"><rect x="0.8" y="0.8" width="12.4" height="9.4" rx="1" fill="#f4f8ff" stroke="#2a5fae" stroke-width="1.6"/><path d="M3.5 4H8.5M3.5 6.5H10" stroke="#2a5fae" stroke-width="1.2"/><path d="M4 11.5H10L11.5 13.6H2.5Z" fill="#2a5fae"/></svg>
<svg style="left:1896px;top:316px" width="15" height="15" viewBox="0 0 15 15"><path d="M0.6 0.6H6.6L9.6 3.6V14.4H0.6Z" fill="#fffdf2" stroke="#b39a57" stroke-width="1.1"/><path d="M2.2 4.5H7M2.2 6.5H7M2.2 8.5H5M2.2 11.5H4" stroke="#9aa6c0" stroke-width="0.9"/><rect x="4.5" y="8.8" width="10" height="4.8" fill="#111"/><rect x="5.4" y="9.7" width="4.2" height="3" fill="#1fc32b"/><rect x="9.6" y="9.7" width="4" height="3" fill="#e01515"/></svg>
</div>
<div id="status">
<i class="sep" style="left:1314px"></i>
<i class="sep" style="left:1418px"></i>
<i class="sep" style="left:1516px"></i>
<span class="t" style="left:1322px;top:1017px;letter-spacing:0.03px">Writable</span>
<span class="t" style="left:1426px;top:1017px;letter-spacing:-0.20px">Smart Insert</span>
<span class="t" style="left:1524.5px;top:1017px;letter-spacing:-0.53px">102 : 6</span>
<i class="abs" style="left:1612px;top:1019px;width:2px;height:15px;background:repeating-linear-gradient(#9a917c 0 2px,transparent 2px 4px)"></i>
<svg style="left:1900px;top:1020px" width="15" height="15" viewBox="0 0 15 15"><rect x="0.5" y="0.5" width="14" height="14" rx="2" fill="#f58a1f" stroke="#d9700f" stroke-width="1"/><circle cx="4.2" cy="10.9" r="1.4" fill="#fff"/><path d="M3 7.2A4.8 4.8 0 0 1 7.8 12M3 4A8 8 0 0 1 11 12" stroke="#fff" stroke-width="1.5" fill="none"/></svg>
</div>
<div id="taskbar">
<svg style="left:16px;top:12px" width="16" height="16" viewBox="0 0 16 16"><path d="M0 2.3L6.5 1.4V7.6H0ZM7.4 1.3L16 0V7.6H7.4ZM0 8.4H6.5V14.6L0 13.7ZM7.4 8.4H16V16L7.4 14.7Z" fill="#fff"/></svg>
<i class="abs" style="left:48px;top:0;width:344px;height:40px;background:#F2F2F2;border-top:1px solid #bcbcbc"></i>
<svg style="left:57px;top:9px" width="22" height="22" viewBox="0 0 22 22"><circle cx="11" cy="11" r="9.2" fill="none" stroke="#0a0a0a" stroke-width="2.9"/></svg>
<span class="t" style="left:88px;top:11px;font-size:15px;line-height:20px;height:20px;color:#2a2a2a;letter-spacing:-0.24px">Type here to search</span>
<svg style="left:365px;top:12px" width="13" height="18" viewBox="0 0 13 18"><rect x="3.6" y="0.8" width="5.8" height="10.4" rx="2.4" fill="none" stroke="#2e2e2e" stroke-width="1.3"/><path d="M0.9 7.5V8.5A5.6 5.6 0 0 0 12.1 8.5V7.5M6.5 14.2V16.6M3.5 16.9H9.5" stroke="#2e2e2e" stroke-width="1.2" fill="none"/></svg>
<svg style="left:407px;top:12px" width="17" height="16" viewBox="0 0 17 16"><rect x="2.2" y="3.2" width="9" height="9.6" fill="none" stroke="#fff" stroke-width="1.3"/><path d="M1 0.8H12.6M1 15.2H12.6M1 0.2V2.4M12.6 0.2V2.4M1 13.6V15.8M12.6 13.6V15.8" stroke="#fff" stroke-width="1.3"/><path d="M15.8 0.2V4" stroke="#fff" stroke-width="1.3"/><rect x="14.8" y="4.4" width="2" height="3" fill="#fff"/><path d="M15.8 9V15.8" stroke="#fff" stroke-width="1.3"/></svg>
<svg style="left:457px;top:9px" width="21" height="22" viewBox="0 0 21 22"><path d="M1.2 10.4C1.6 4.2 6 0.6 11 0.6C17 0.6 20.6 5 20.4 10.6V12.6H7.4C7.8 16 10.6 17.2 13.6 17.2C15.8 17.2 17.8 16.6 19.4 15.6V20C17.6 21 15.4 21.6 12.6 21.6C6.4 21.6 2.6 17.6 2.6 12.2C2.6 8.8 4.4 6 7.2 4.4C4.4 5 2.2 7.4 1.2 10.4ZM7.6 8.8H14.6C14.5 6 13 4.6 11.1 4.6C9.2 4.6 7.9 6.2 7.6 8.8Z" fill="#0e7ad6"/></svg>
<svg style="left:503px;top:9px" width="25" height="21" viewBox="0 0 25 21"><path d="M1 8L12.5 1L24 8V20H1Z" fill="#fff"/><path d="M2.6 8.4L12.5 14L22.4 8.4Z" fill="#2c2c2c"/></svg>
<i class="abs" style="left:511px;top:19px;width:29px;height:17px;border-radius:9px;background:rgba(70,70,70,.88);border:1.2px solid #cfcfcf"></i>
<span class="t" style="left:514.5px;top:19.5px;font-size:11.5px;font-weight:bold;color:#fff;letter-spacing:-0.5px">99+</span>
<svg style="left:553px;top:11px" width="23" height="19" viewBox="0 0 23 19"><path d="M1 2.2Q1 1.2 2 1.2H8.2L10 3H21.4Q22.4 3 22.4 4V18H1Z" fill="#f7d673"/><path d="M1 4.8H22.4V18H1Z" fill="#fbe59a"/><path d="M2.2 1.8H7.2" stroke="#39b6e8" stroke-width="1"/><path d="M4.8 10.4H18.6V18.4H14.6V14.4H8.8V18.4H4.8Z" fill="#2fa8ea"/><path d="M3.4 10.4H20V11.6H3.4Z" fill="#58c1f5"/></svg>
<svg style="left:602px;top:7px" width="24" height="24" viewBox="0 0 24 24"><path d="M7.4 7.6V5.4A4.6 4.6 0 0 1 16.6 5.4V7.6" fill="none" stroke="#fff" stroke-width="1.3"/><path d="M0.4 7H23.2V22.4Q23.2 23.6 22 23.6H1.6Q0.4 23.6 0.4 22.4Z" fill="#fff"/><rect x="6.2" y="10.2" width="5" height="5" fill="#f25022"/><rect x="12.4" y="10.2" width="5" height="5" fill="#7fba00"/><rect x="6.2" y="16.4" width="5" height="5" fill="#00a4ef"/><rect x="12.4" y="16.4" width="5" height="5" fill="#ffb900"/></svg>
<svg style="left:651.5px;top:8.5px" width="23" height="23" viewBox="0 0 23 23"><circle cx="11.2" cy="11.2" r="11" fill="#dd5144"/><path d="M11.2 11.2L1.7 5.7A11 11 0 0 0 9.3 22.03L14 13.9Z" fill="#1da462"/><path d="M11.2 11.2L9.3 22.03A11 11 0 0 0 20.73 5.7H12Z" fill="#ffcd46"/><path d="M11.2 11.2L20.73 5.7A11 11 0 0 0 1.7 5.7L6.5 13.9Z" fill="#dd5144"/><circle cx="11.2" cy="11.2" r="5.2" fill="#fff"/><circle cx="11.2" cy="11.2" r="4.1" fill="#4c8bf5"/></svg>
<i class="abs" style="left:643px;top:38px;width:40px;height:2px;background:#76C8EC"></i>
<i class="abs" style="left:688px;top:0;width:48px;height:40px;background:#5f5f5f"></i>
<i class="abs" style="left:688px;top:38px;width:48px;height:2px;background:#76C8EC"></i>
<svg style="left:700px;top:8.5px" width="24" height="23" viewBox="0 0 24 23"><circle cx="11.2" cy="11.2" r="11" fill="#f7941e"/><circle cx="12.6" cy="11.2" r="10.6" fill="#2c2255"/><rect x="3" y="7.6" width="20.4" height="1.9" fill="#fff"/><rect x="2.4" y="10.4" width="21.2" height="1.9" fill="#fff"/><rect x="3" y="13.2" width="20.4" height="1.9" fill="#fff"/></svg>
<svg style="left:1651px;top:12px" width="16" height="16" viewBox="0 0 16 16"><circle cx="11" cy="3.4" r="2.6" fill="none" stroke="#fff" stroke-width="1.2"/><path d="M7 11Q7.4 7 11 7Q14.4 7 15 10.4" fill="none" stroke="#fff" stroke-width="1.2"/><circle cx="5.4" cy="8.6" r="2.6" fill="none" stroke="#fff" stroke-width="1.2"/><path d="M1 16Q1.4 12.2 5.4 12.2Q9.4 12.2 9.8 16" fill="none" stroke="#fff" stroke-width="1.2"/></svg>
<svg style="left:1689px;top:16px" width="13" height="8" viewBox="0 0 13 8"><path d="M1 7L6.5 1.5L12 7" stroke="#fff" stroke-width="1.3" fill="none"/></svg>
<svg style="left:1710.5px;top:11.5px" width="17" height="17" viewBox="0 0 17 17"><circle cx="8.5" cy="8.5" r="7.8" fill="#0c1a0c" stroke="#15d515" stroke-width="1.1"/><path d="M4 11.6Q2.4 11.6 2.4 9.8Q2.4 8.2 4.2 8Q4.6 5.8 6.8 5.8Q7.6 4 9.6 4Q12.2 4 12.6 6.8Q14.8 7 14.8 9.4Q14.8 11.6 12.8 11.6Z" fill="#12e012"/></svg>
<svg style="left:1735px;top:14px" width="17" height="12" viewBox="0 0 17 12"><rect x="5.6" y="2.8" width="9.6" height="6.6" fill="none" stroke="#fff" stroke-width="1.1"/><rect x="15.6" y="4.6" width="1.2" height="3" fill="#fff"/><rect x="7" y="4.2" width="4.6" height="3.8" fill="#fff"/><path d="M1.4 0.4V2.6M4.2 0.4V2.6M0.4 2.8H5.2V4.6Q5.2 6.6 2.8 6.6Q0.4 6.6 0.4 4.6ZM2.8 6.6V10.4H5.6" stroke="#fff" stroke-width="1" fill="none"/></svg>
<svg style="left:1761px;top:13px" width="14" height="14" viewBox="0 0 14 14"><path d="M1 13A12 12 0 0 1 13 1" stroke="#9a9a9a" stroke-width="1.2" fill="none"/><path d="M4.4 13A8.6 8.6 0 0 1 13 4.4" stroke="#b5b5b5" stroke-width="1.2" fill="none"/><path d="M7.8 13A5.2 5.2 0 0 1 13 7.8" stroke="#d0d0d0" stroke-width="1.2" fill="none"/><circle cx="12" cy="12.2" r="1.5" fill="#fff"/></svg>
<svg style="left:1782px;top:14px" width="15" height="13" viewBox="0 0 15 13"><path d="M0.6 4.2H3.2L6.6 0.8V12.2L3.2 8.8H0.6Z" fill="none" stroke="#fff" stroke-width="1.1" stroke-linejoin="round"/><path d="M9.4 4.2L14 8.8M14 4.2L9.4 8.8" stroke="#fff" stroke-width="1.1"/></svg>
<span class="t" style="left:1814.5px;top:3px;letter-spacing:-0.53px">5:15 PM</span>
<span class="t" style="left:1810px;top:21px;letter-spacing:-0.17px">11/4/2018</span>
<svg style="left:1878px;top:12px" width="17" height="16" viewBox="0 0 17 16"><path d="M0.6 0.6H16.4V12.4H5.4L2.6 15.2V12.4H0.6Z" fill="#fff"/><path d="M3.2 3.6H13.8M3.2 6H13.8M3.2 8.4H13.8" stroke="#2c2c2c" stroke-width="1"/></svg>
<i class="abs" style="left:1885.5px;top:19px;width:18px;height:18px;border-radius:9px;background:rgba(70,70,70,.9);border:1.2px solid #cfcfcf"></i>
<span class="t" style="left:1888.6px;top:20px;font-size:11.5px;font-weight:bold;color:#fff;letter-spacing:-0.6px">41</span>
<i class="abs" style="left:1915px;top:0;width:1px;height:40px;background:#6e6e6e"></i>
</div>
</body>
</html>
